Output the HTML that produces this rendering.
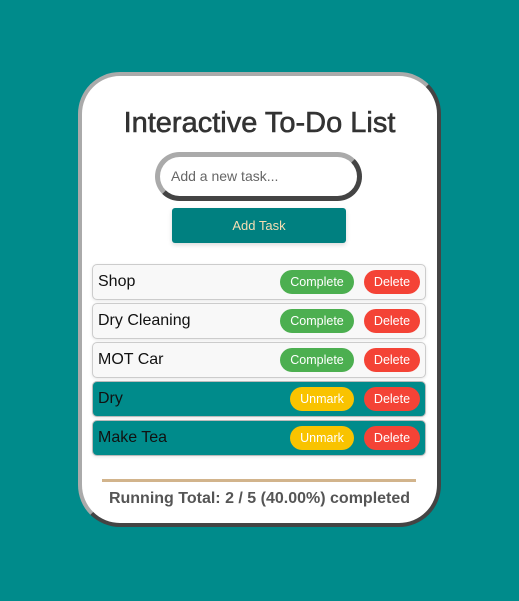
<!DOCTYPE html><html><head><style>
body{margin:0;width:519px;height:601px;background:#008b8b;font-family:"Liberation Sans",sans-serif;position:relative;overflow:hidden}
.card{position:absolute;left:78px;top:72px;width:355px;height:447px;border:4px solid;border-color:#aaa #444 #444 #aaa;border-radius:42px;background:#fff}
h1{position:absolute;left:0;right:0;top:31px;margin:0;text-align:center;font-size:29px;font-weight:normal;color:#333;-webkit-text-stroke:0.6px #333}
.inp{position:absolute;left:73px;top:76px;width:197px;height:39px;border:5px solid;border-color:#aaa #444 #444 #aaa;border-radius:26px;box-sizing:content-box}
.inp span{position:absolute;left:11px;top:11px;font-size:14px;color:#666}
.add{position:absolute;left:90px;top:132px;width:174px;height:35px;background:#008080;border-radius:3px;color:#f5deb3;font-size:13px;text-align:center;line-height:35px;box-shadow:0 2px 5px rgba(0,0,0,.15)}
.item{position:absolute;left:10px;width:332px;height:34px;border:1px solid #ccc;border-radius:5px;background:#f8f8f8;box-shadow:0 1px 3px rgba(0,0,0,.1)}
.item.done{background:#008b8b;border-color:#bbb}
.item .t{position:absolute;left:5px;top:8px;font-size:16px;color:#111}
.b{position:absolute;top:5px;height:24px;line-height:24px;border-radius:12px;color:#fff;font-size:12.5px;text-align:center}
.c{left:187px;width:74px;background:#4caf50}
.u{left:197px;width:64px;background:#f9c300}
.d{left:271px;width:56px;background:#f44336}
.line{position:absolute;left:20px;top:403px;width:314px;height:3px;background:#d2b48c}
.tot{position:absolute;left:0;right:0;top:414px;text-align:center;font-size:16px;font-weight:bold;color:#555}
</style></head><body>
<div class="card">
<h1>Interactive To-Do List</h1>
<div class="inp"><span>Add a new task...</span></div>
<div class="add">Add Task</div>
<div class="item" style="top:188px"><span class="t">Shop</span><span class="b c">Complete</span><span class="b d">Delete</span></div>
<div class="item" style="top:227px"><span class="t">Dry Cleaning</span><span class="b c">Complete</span><span class="b d">Delete</span></div>
<div class="item" style="top:266px"><span class="t">MOT Car</span><span class="b c">Complete</span><span class="b d">Delete</span></div>
<div class="item done" style="top:305px"><span class="t">Dry</span><span class="b u">Unmark</span><span class="b d">Delete</span></div>
<div class="item done" style="top:344px"><span class="t">Make Tea</span><span class="b u">Unmark</span><span class="b d">Delete</span></div>
<div class="line"></div>
<div class="tot">Running Total: 2 / 5 (40.00%) completed</div>
</div>
</body></html>
